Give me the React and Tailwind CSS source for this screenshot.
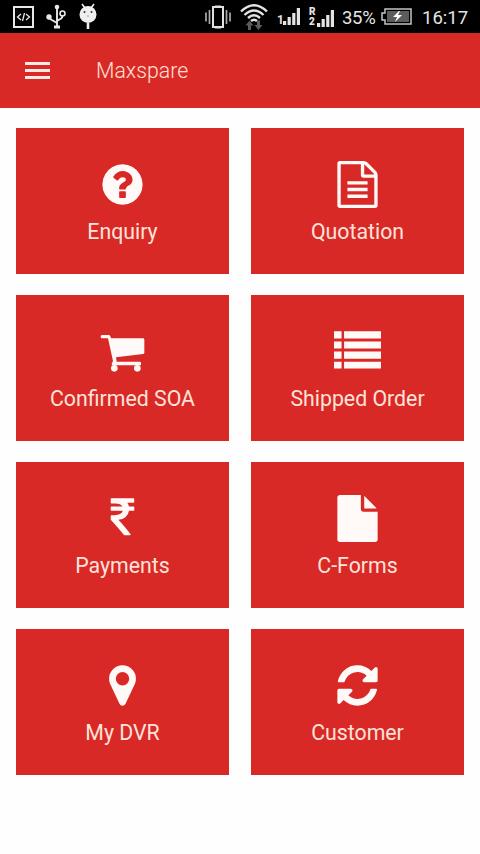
function Icon({ viewBox = '0 0 1792 1792', children }) {
  return (
    <svg viewBox={viewBox} className="h-[47px] w-[47px] shrink-0" fill="#fffaf8">
      {children}
    </svg>
  )
}

const icons = {
  question: (
    <Icon>
      <path d="M1024 1376v-192q0-14-9-23t-23-9h-192q-14 0-23 9t-9 23v192q0 14 9 23t23 9h192q14 0 23-9t9-23zm256-672q0-88-55.5-163t-138.5-116-170-41q-243 0-371 213-15 24 8 42l132 100q7 6 19 6 16 0 25-12 53-68 86-92 34-24 86-24 48 0 85.5 26t37.5 59q0 38-20 61t-68 45q-63 28-115.5 86.5t-52.5 125.5v36q0 14 9 23t23 9h192q14 0 23-9t9-23q0-19 21.5-49.5t54.5-49.5q32-18 49-28.5t46-35 44.5-48 28-60.5 12.5-81zm384 192q0 209-103 385.5t-279.5 279.5-385.5 103-385.5-103-279.5-279.5-103-385.5 103-385.5 279.5-279.5 385.5-103 385.5 103 279.5 279.5 103 385.5z" />
    </Icon>
  ),
  fileText: (
    <Icon>
      <path d="M1596 380q28 28 48 76t20 88v1152q0 40-28 68t-68 28h-1344q-40 0-68-28t-28-68v-1600q0-40 28-68t68-28h896q40 0 88 20t76 48zm-444-244v376h376q-10-29-22-41l-313-313q-12-12-41-22zm384 1528v-1024h-416q-40 0-68-28t-28-68v-416h-768v1536h1280z" />
      <path d="M512 768h768v128H512zM512 1024h768v128H512zM512 1280h768v128H512z" />
    </Icon>
  ),
  cart: (
    <Icon viewBox="0 0 141 141">
      <path d="M9 21h20q4 0 5 4l2 6h96q4 0 4 4v39q0 4-4 4L51 88l2 13h69q4 0 4 4v7H42q-4 0-4-5l4-8L27 31H9q-4 0-4-5t4-5z" />
      <circle cx="46" cy="121" r="10" />
      <circle cx="115" cy="121" r="10" />
    </Icon>
  ),
  list: (
    <Icon>
      <path d="M0 124h288v272H0zM384 124h1408v272H384zM0 512h288v272H0zM384 512h1408v272H384zM0 900h288v268H0zM384 900h1408v268H384zM0 1284h288v262H0zM384 1284h1408v262H384z" />
    </Icon>
  ),
  rupee: (
    <Icon>
      <path d="M1345 470v102q0 14-9 23t-23 9h-168q-23 144-129 234t-276 110q167 178 459 536 14 16 4 34-8 18-29 18h-195q-16 0-25-12-306-367-498-571-9-9-9-22v-127q0-13 9.500-22.500t22.500-9.500h112q132 0 212.500-43t102.500-125h-427q-14 0-23-9t-9-23v-102q0-14 9-23t23-9h413q-57-113-268-113h-145q-13 0-22.500-9.500t-9.500-22.500v-133q0-14 9-23t23-9h832q14 0 23 9t9 23v102q0 14-9 23t-23 9h-233q47 61 64 144h171q14 0 23 9t9 23z" />
    </Icon>
  ),
  file: (
    <Icon>
      <path d="M1152 512v-472q22 14 36 28l408 408q14 14 28 36h-472zm-128 32q0 40 28 68t68 28h544v1056q0 40-28 68t-68 28h-1344q-40 0-68-28t-28-68v-1600q0-40 28-68t68-28h800v544z" />
    </Icon>
  ),
  marker: (
    <Icon>
      <path d="M1152 640q0-106-75-181t-181-75-181 75-75 181 75 181 181 75 181-75 75-181zm256 0q0 109-33 179l-364 774q-16 33-47.500 52t-67.500 19-67.500-19-46.500-52l-365-774q-33-70-33-179 0-212 150-362t362-150 362 150 150 362z" />
    </Icon>
  ),
  refresh: (
    <Icon>
      <path d="M1639 1056q0 5-1 7-64 268-268 434.500t-478 166.500q-146 0-282.500-55t-243.500-157l-129 129q-19 19-45 19t-45-19-19-45v-448q0-26 19-45t45-19h448q26 0 45 19t19 45-19 45l-137 137q71 66 161 102t187 36q134 0 250-65t186-179q11-17 53-117 8-23 30-23h192q13 0 22.500 9.500t9.500 22.500zm25-800v448q0 26-19 45t-45 19h-448q-26 0-45-19t-19-45 19-45l138-138q-148-137-349-137-134 0-250 65t-186 179q-11 17-53 117-8 23-30 23h-199q-13 0-22.500-9.500t-9.500-22.500v-7q65-268 270-434.500t480-166.500q146 0 284 55.500t245 156.500l130-129q19-19 45-19t45 19 19 45z" />
    </Icon>
  ),
}

const tiles = [
  { label: 'Enquiry', icon: 'question' },
  { label: 'Quotation', icon: 'fileText' },
  { label: 'Confirmed SOA', icon: 'cart' },
  { label: 'Shipped Order', icon: 'list' },
  { label: 'Payments', icon: 'rupee' },
  { label: 'C-Forms', icon: 'file' },
  { label: 'My DVR', icon: 'marker' },
  { label: 'Customer', icon: 'refresh' },
]

function SignalBars() {
  return (
    <svg viewBox="0 0 18 18" className="h-[18px] w-[18px]" fill="#e4e4e4">
      <path d="M0 13h3.200v4H0zM4.600 9h3.200v8H4.600zM9.200 5h3.200v12H9.200zM13.800 0H17v17h-3.200z" />
    </svg>
  )
}

function StatusBar() {
  return (
    <div className="flex h-[33px] items-center bg-black pl-[13px] font-[Roboto] text-[#e4e4e4]">
      {/* Notifications */}
      <svg viewBox="0 0 21 22" className="h-[22px] w-[21px]" fill="none" stroke="#e8e8e8">
        <rect x="1" y="1" width="19" height="20" strokeWidth="2" />
        <path d="M8 8l-3.500 3L8 14M13 8l3.500 3-3.500 3M11.500 7l-2 8" strokeWidth="1.300" />
      </svg>
      <svg viewBox="0 0 20 25" className="ml-[12px] h-[25px] w-[20px]" fill="none" stroke="#e8e8e8" strokeWidth="1.900">
        <path d="M11 3v19M11 19l-6-3.500q-2-1-2-4M11 17l4-2.500q1.500-1 1.500-3" />
        <circle cx="11" cy="3" r="2.300" fill="#e8e8e8" stroke="none" />
        <circle cx="3" cy="13" r="2.700" fill="#e8e8e8" stroke="none" />
        <circle cx="16.500" cy="9.500" r="2.500" strokeWidth="1.600" />
        <path d="M8 23h6" strokeWidth="3" />
      </svg>
      <svg viewBox="0 0 18 27" className="ml-[13px] h-[27px] w-[18px]" fill="#efefef">
        <path d="M3 1l3 4M15 1l-3 4" stroke="#efefef" strokeWidth="1.600" />
        <circle cx="9" cy="11.500" r="8.500" />
        <path d="M7.700 20h2.600v6H7.700z" />
        <circle cx="5.500" cy="9" r="1" fill="#333" />
        <circle cx="12.500" cy="9" r="1" fill="#333" />
        <circle cx="9" cy="13" r=".7" fill="#777" />
      </svg>

      {/* Vibrate */}
      <svg viewBox="0 0 26 24" className="ml-[108px] h-[24px] w-[26px]" fill="none" stroke="#e0e0e0">
        <rect x="8" y="2" width="10" height="20" strokeWidth="2" />
        <path d="M10 1.500h6M10 22.500h6" strokeWidth="2" />
        <path d="M1 7.500v9M25 7.500v9M4.500 5v14M21.500 5v14" stroke="#aaa" strokeWidth="1.700" />
      </svg>

      {/* Wifi with data arrows */}
      <svg viewBox="0 0 28 28" className="ml-[9px] h-[28px] w-[28px]" fill="none" stroke="#e4e4e4" strokeWidth="2.400">
        <path d="M1 8.500Q14-4 27 8.500M4.500 12q9.500-9 19 0M8 15q6-5.500 12 0M11 18q3-2.500 6 0" />
        <path d="M9.500 17.500l4 5h-2.500v4.500h-3v-4.500H5.500zM18.500 27l-4-5H17V17.500h3v4.500h2.500z" fill="#5c5c5c" stroke="none" />
      </svg>

      {/* SIM 1 and SIM 2 */}
      <div className="ml-[9px] flex items-end gap-px">
        <span className="w-[5px] text-[12px] leading-[12px] font-bold">1</span>
        <SignalBars />
      </div>
      <div className="ml-[8px] flex items-end">
        <span className="flex w-[8px] flex-col text-[10px] leading-[12px] font-black">
          <span className="-mb-px h-[11px]">R</span>
          <span>2</span>
        </span>
        <SignalBars />
      </div>

      <span className="mt-[2px] ml-[7px] w-[36px] text-[18.500px] leading-[22px] tracking-[-0.300px]">35%</span>

      {/* Battery, charging */}
      <svg viewBox="0 0 31 17" className="ml-[3px] h-[17px] w-[31px]" fill="none">
        <path d="M4 1h26v15H4v-4H1V5h3z" stroke="#c4c4c4" strokeWidth="1.500" />
        <path d="M6 3h22v11H6z" fill="#5c5c5c" />
        <path d="M18 3l-6 6h4l-2 5 7-7h-4l2-4z" fill="#fff" />
      </svg>
      <span className="mt-[2px] ml-[10px] text-[18.500px] leading-[22px]">16:17</span>
    </div>
  )
}

function Tile({ label, icon }) {
  return (
    <button className="flex h-[146px] flex-col items-center bg-[#d92926] pt-[33px]">
      {icons[icon]}
      <span className="mt-[11px] text-[21.300px] leading-[26px] whitespace-nowrap text-[#ffe3da]">{label}</span>
    </button>
  )
}

export default function App() {
  return (
    <div className="h-[854px] w-[480px] overflow-hidden bg-[#fefefe] font-[Roboto,sans-serif]">
      <StatusBar />
      <header className="flex h-[75px] items-center bg-[#d92926] pl-[25px]">
        <button className="flex w-[25px] flex-col gap-[4px]">
          <span className="h-[3px] w-full bg-[#ffe9e2]" />
          <span className="h-[3px] w-full bg-[#ffe9e2]" />
          <span className="h-[3px] w-full bg-[#ffe9e2]" />
        </button>
        <h1 className="ml-[46px] text-[21.300px] leading-[26px] font-light text-[#ffe0d6]">Maxspare</h1>
      </header>
      <main className="grid grid-cols-2 gap-x-[22px] gap-y-[21px] px-4 pt-5">
        {tiles.map((tile) => (
          <Tile key={tile.label} {...tile} />
        ))}
      </main>
    </div>
  )
}
